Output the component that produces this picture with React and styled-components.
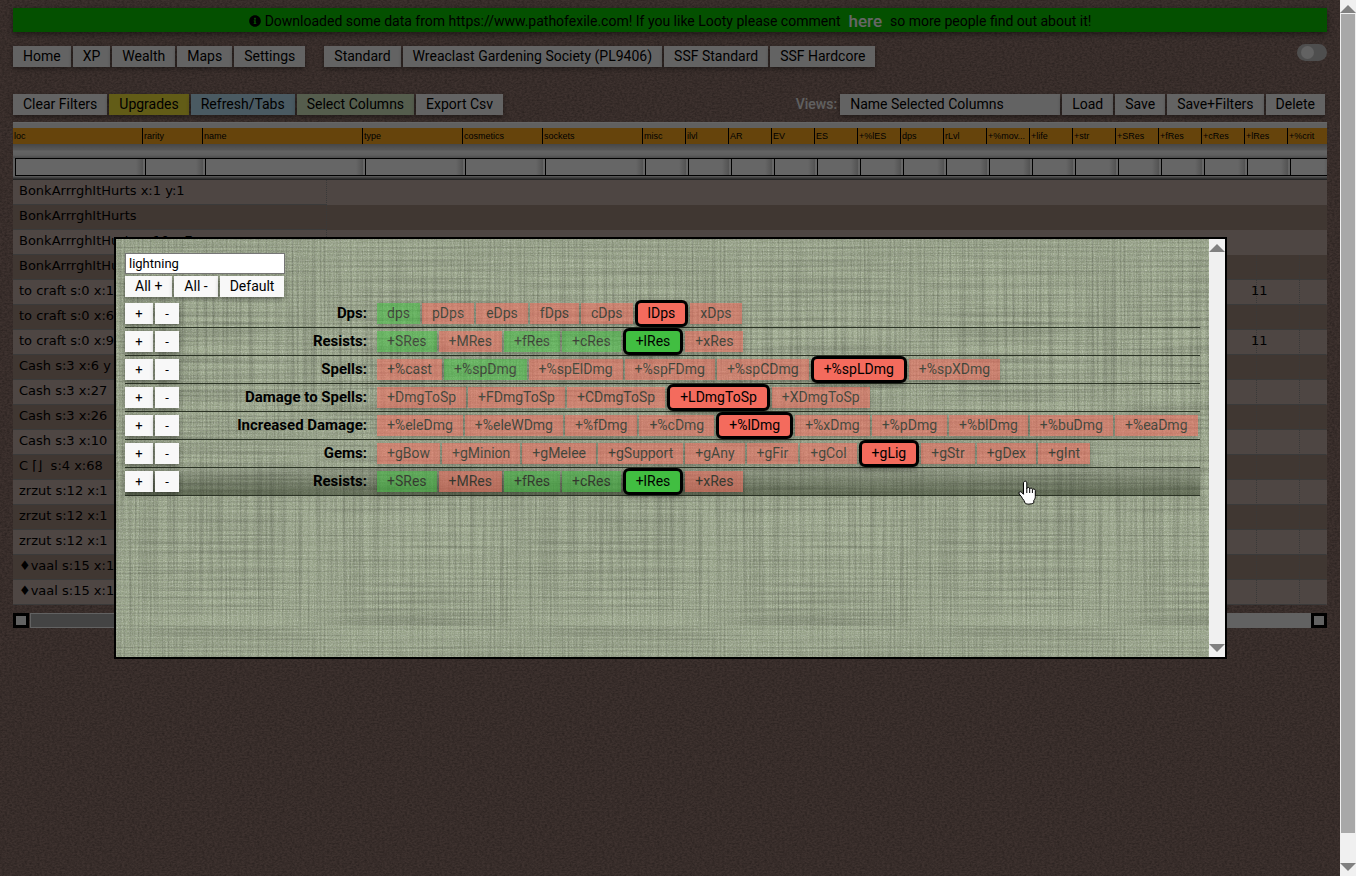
import React from 'react';
import styled, { createGlobalStyle, css } from 'styled-components';
import { FaInfoCircle } from 'react-icons/fa';

const svgUrl = (svg) => `url("data:image/svg+xml,${encodeURIComponent(svg)}")`;

const noise = (fx, fy, seed, tone, gain, base) => svgUrl(
  `<svg xmlns="http://www.w3.org/2000/svg" width="400" height="400"><filter id="n" x="0" y="0" width="100%" height="100%"><feTurbulence type="fractalNoise" baseFrequency="${fx} ${fy}" numOctaves="3" seed="${seed}" stitchTiles="stitch"/><feColorMatrix values="0 0 0 0 ${tone}  0 0 0 0 ${tone}  0 0 0 0 ${tone}  ${gain} 0 0 0 ${base}"/></filter><rect width="400" height="400" filter="url(#n)"/></svg>`
);

const leather = noise(0.4, 0.6, 4, 0, 0.5, -0.14);

const linen = [
  noise(0.5, 0.006, 3, 0, 0.4, -0.15),
  noise(0.006, 0.5, 8, 0, 0.4, -0.15),
  noise(0.8, 0.8, 5, 1, 0.6, -0.2),
].join(', ');

const GlobalStyle = createGlobalStyle`
  *, *::before, *::after { box-sizing: border-box; }
  body { margin: 0; background: #372c2a; font: 14px/21px Roboto, sans-serif; color: #000; }
  button, input { font: inherit; color: inherit; margin: 0; }
`;

const Screen = styled.div`
  display: flex;
  height: 100vh;
  overflow: hidden;
`;

const Main = styled.div`
  position: relative;
  flex: 1;
  min-width: 0;
  padding: 8px 13px;
  overflow: hidden;
  background: ${leather} #9c7e76;
`;

const Banner = styled.div`
  display: flex;
  align-items: center;
  justify-content: center;
  height: 24px;
  padding-top: 2px;
  background: #0cc800;
  box-shadow: 0 2px 6px rgba(0, 0, 0, 0.5);
  white-space: pre;

  svg { margin-right: 4px; }
`;

const BannerLink = styled.a`
  margin: 0 8px;
  color: #fff;
  font-size: 17px;
  font-weight: 500;
  text-decoration: none;
`;

const Bar = styled.div`
  display: flex;
  align-items: center;
  gap: 2px;
  height: 21px;
  margin-top: ${(p) => p.$top}px;
`;

const Gap = styled.span`
  width: 15px;
`;

const Spacer = styled.span`
  flex: 1;
`;

const tones = {
  plain: '#f8f8f8',
  gold: '#f6e63a',
  sky: '#b8e0f4',
  sage: '#d4e8c0',
};

const Button = styled.button`
  height: 21px;
  padding: 0 10px;
  border: 0;
  background: ${(p) => tones[p.$tone || 'plain']};
  box-shadow: 0 2px 5px rgba(0, 0, 0, 0.4);
  line-height: 21px;
  white-space: nowrap;
`;

const ViewsLabel = styled.label`
  margin-right: 1px;
  color: #f0f0f0;
  font-weight: 500;
`;

const ViewInput = styled.input`
  width: 220px;
  height: 21px;
  padding: 0 10px;
  border: 0;
  background: #f8f8f8;
  box-shadow: 0 2px 5px rgba(0, 0, 0, 0.4);
`;

const Toggle = styled.input`
  appearance: none;
  align-self: flex-start;
  display: flex;
  align-items: center;
  width: 30px;
  height: 17px;
  margin: -2px 0 0;
  padding-left: 4px;
  border-radius: 9px;
  background: #c4c4c4;

  &::before {
    content: '';
    width: 13px;
    height: 13px;
    border-radius: 50%;
    background: #f4f4f4;
  }
`;

const Grid = styled.section`
  margin-top: 7px;
  overflow: hidden;
`;

const HeadTable = styled.table`
  width: 1317px;
  table-layout: fixed;
  border-collapse: separate;
  border-spacing: 0;
  background: #f0f0f0;
`;

const HeadPad = styled.div`
  height: 6px;
  background: #f0f0f0;
  border-top: 1px solid #fff;
`;

const HeadCell = styled.th`
  height: 16px;
  padding: 0 0 0 1px;
  border-left: ${(p) => (p.$first ? '0' : '1px solid #000')};
  background: #ffab20;
  font-family: "Liberation Sans", sans-serif;
  font-size: 9px;
  font-weight: 400;
  line-height: 16px;
  text-align: left;
  white-space: nowrap;
  overflow: hidden;
`;

const FilterRow = styled.tr`
  background: linear-gradient(#b0b0b0, #dcdcdc 6px, #f8f8f8 7px, #eee 11px, #bbb 14px, #eee 15px, #eee 32px, #bbb 33px, #444 36px);
`;

const FilterCell = styled.td`
  height: 36px;
  padding: 14px 0 4px ${(p) => (p.$first ? 2 : 3)}px;
`;

const FilterInput = styled.input`
  display: block;
  width: calc(100% + 3px);
  height: 18px;
  border: 1px solid #000;
  border-right: 0;
  background: linear-gradient(90deg, #fff calc(100% - 9px), #d0d0d0 calc(100% - 2px), #fff calc(100% - 2px));
  border-radius: 0;
`;

const BodyTable = styled.table`
  width: 100%;
  table-layout: fixed;
  border-collapse: separate;
  border-spacing: 0;
  font: 13px/20px "DejaVu Sans", Verdana, sans-serif;
`;

const BodyRow = styled.tr`
  height: 25px;
  background: ${(p) => (p.$alt ? '#a0897d' : '#c4afa8')};
`;

const BodyCell = styled.td`
  height: 25px;
  padding: 0 0 2px ${(p) => (p.$value ? 37 : 6)}px;
  border-right: 1px dotted ${(p) => (p.$open ? 'transparent' : '#8f8f8f')};
  border-bottom: 1px solid ${(p) => (p.$bare ? 'transparent' : '#929292')};
  white-space: pre;
`;

const Pager = styled.div`
  display: flex;
  height: 15px;
  margin-top: 8px;
`;

const PagerHandle = styled.button`
  width: 16px;
  height: 15px;
  padding: 0;
  border: 3px solid #000;
  background: #f4f4f4;
`;

const PagerTrack = styled.div`
  flex: ${(p) => p.$grow};
  margin-left: ${(p) => (p.$dark ? 1 : 0)}px;
  border: 1px solid #f4f4f4;
  background: ${(p) => (p.$dark ? '#aaa' : '#f4f4f4')};
`;

const Overlay = styled.div`
  position: absolute;
  inset: 0;
  display: flex;
  align-items: flex-start;
  padding: 237px 113px 0 114px;
  background: rgba(0, 0, 0, 0.6);
`;

const Dialog = styled.section`
  display: flex;
  flex: 1;
  min-width: 0;
  height: 422px;
  border: 2px solid #000;
  background: ${linen}, #9eaa8e;
`;

const DialogBody = styled.div`
  flex: 1;
  min-width: 0;
  padding: 14px 9px;
`;

const Search = styled.input`
  display: block;
  width: 160px;
  height: 21px;
  padding: 0 3px;
  border: 1px solid #767676;
  background: #fff;
  font-size: 13px;
`;

const Choices = styled.div`
  margin-top: 3px;
`;

const ChoiceRow = styled.div`
  display: flex;
  align-items: center;
  gap: 2px;
  height: 28px;
  border-bottom: 1px solid #2c3426;
  ${(p) => p.$hover && css`
    background: linear-gradient(rgba(80, 80, 80, 0.15), rgba(40, 50, 30, 0.5));
  `}
`;

const SignButton = styled(Button)`
  width: ${(p) => (p.$wide ? 28 : 24)}px;
  padding: 0;
  font-size: 13px;
`;

const ChoiceLabel = styled.span`
  width: 186px;
  margin-right: 8px;
  font-size: 15px;
  font-weight: 700;
  text-align: right;
  white-space: nowrap;
`;

const Chip = styled(Button)`
  background: ${(p) => (p.$on ? '#41be41' : '#f46b5d')};
  opacity: 0.55;
  ${(p) => p.$hit && css`
    height: 27px;
    border: 3px solid #000;
    border-radius: 6px;
    opacity: 1;
  `}
`;

const ScrollBar = styled.div`
  display: flex;
  flex-direction: column;
  width: 16px;
  flex: none;
  background: #f0f0f0;
`;

const ScrollThumb = styled.div`
  flex: 1;
  margin: 0 1px ${(p) => p.$rest}px;
  background: ${(p) => (p.$hidden ? 'transparent' : '#a8a8a8')};
`;

const Arrow = styled.svg`
  display: block;
  width: 16px;
  height: ${(p) => p.$h}px;
  fill: #808080;
`;

const Pointer = styled.svg`
  position: absolute;
  left: 1018px;
  top: 480px;
  width: 19px;
  height: 26px;
`;

const columns = [
  ['loc', 129], ['rarity', 60], ['name', 160], ['type', 100], ['cosmetics', 80], ['sockets', 100],
  ['misc', 43], ['ilvl', 43], ['AR', 43], ['EV', 43], ['ES', 43], ['+%lES', 43], ['dps', 43],
  ['rLvl', 43], ['+%mov...', 43], ['+life', 43], ['+str', 43], ['+SRes', 43], ['+fRes', 43],
  ['+cRes', 43], ['+lRes', 43], ['+%crit', 43],
];

const items = [
  { loc: 'BonkArrrghItHurts x:1 y:1', group: true },
  { loc: 'BonkArrrghItHurts', group: true },
  { loc: 'BonkArrrghItHurts x:10 y:7', group: true },
  { loc: 'BonkArrrghItHurts' },
  { loc: 'to craft s:0 x:1', res: '11' },
  { loc: 'to craft s:0 x:6' },
  { loc: 'to craft s:0 x:9', res: '11' },
  { loc: 'Cash s:3 x:6 y' },
  { loc: 'Cash s:3 x:27' },
  { loc: 'Cash s:3 x:26' },
  { loc: 'Cash s:3 x:10' },
  { loc: 'C ⌈⌋  s:4 x:68' },
  { loc: 'zrzut s:12 x:1' },
  { loc: 'zrzut s:12 x:1' },
  { loc: 'zrzut s:12 x:1' },
  { loc: '♦vaal s:15 x:1' },
  { loc: '♦vaal s:15 x:1' },
];

// "*" marks a column that is switched on, "!" one that matches the search
const resists = ['*+SRes', '+MRes', '*+fRes', '*+cRes', '*!+lRes', '+xRes'];
const groups = [
  ['Dps:', ['*dps', 'pDps', 'eDps', 'fDps', 'cDps', '!lDps', 'xDps']],
  ['Resists:', resists],
  ['Spells:', ['+%cast', '*+%spDmg', '+%spElDmg', '+%spFDmg', '+%spCDmg', '!+%spLDmg', '+%spXDmg']],
  ['Damage to Spells:', ['+DmgToSp', '+FDmgToSp', '+CDmgToSp', '!+LDmgToSp', '+XDmgToSp']],
  ['Increased Damage:', ['+%eleDmg', '+%eleWDmg', '+%fDmg', '+%cDmg', '!+%lDmg', '+%xDmg', '+%pDmg', '+%blDmg', '+%buDmg', '+%eaDmg']],
  ['Gems:', ['+gBow', '+gMinion', '+gMelee', '+gSupport', '+gAny', '+gFir', '+gCol', '!+gLig', '+gStr', '+gDex', '+gInt']],
  ['Resists:', resists, true],
];

function Scroll({ rest, hidden }) {
  return (
    <ScrollBar aria-hidden="true">
      <Arrow $h={14} viewBox="0 0 16 14"><path d="M8 5L16 13H0Z" /></Arrow>
      <ScrollThumb $rest={rest} $hidden={hidden} />
      <Arrow $h={14} viewBox="0 0 16 14"><path d="M0 1H16L8 9Z" /></Arrow>
    </ScrollBar>
  );
}

function ItemGrid() {
  return (
    <Grid>
      <HeadPad />
      <HeadTable>
        <colgroup>{columns.map(([n, w]) => <col key={n} width={w} />)}</colgroup>
        <thead>
          <tr>{columns.map(([n], i) => <HeadCell key={n} $first={i === 0}>{n}</HeadCell>)}</tr>
          <FilterRow>
            {columns.map(([n], i) => (
              <FilterCell key={n} $first={i === 0}><FilterInput aria-label={`Filter ${n}`} /></FilterCell>
            ))}
          </FilterRow>
        </thead>
      </HeadTable>
      <BodyTable>
        <colgroup>
          <col width="314" /><col /><col width="43" /><col width="43" /><col width="27" />
        </colgroup>
        <tbody>
          {items.map((item, i) => (
            <BodyRow key={i} $alt={i % 2 === 1}>
              <BodyCell>{item.loc}</BodyCell>
              {item.group ? <BodyCell colSpan={4} $open $bare /> : (
                <>
                  <BodyCell />
                  <BodyCell $value>{item.res}</BodyCell>
                  <BodyCell />
                  <BodyCell $open />
                </>
              )}
            </BodyRow>
          ))}
        </tbody>
      </BodyTable>
    </Grid>
  );
}

function ColumnDialog() {
  return (
    <Dialog role="dialog" aria-label="Select Columns">
      <DialogBody>
        <Search aria-label="Search columns" defaultValue="lightning" />
        <Bar $top={2}>
          <Button>All +</Button>
          <Button>All -</Button>
          <Button>Default</Button>
        </Bar>
        <Choices>
          {groups.map(([label, chips, hover], i) => (
            <ChoiceRow key={i} $hover={hover}>
              <SignButton $wide>+</SignButton>
              <SignButton>-</SignButton>
              <ChoiceLabel>{label}</ChoiceLabel>
              {chips.map((c) => (
                <Chip key={c} $on={c.includes('*')} $hit={c.includes('!')}>{c.replace(/[*!]/g, '')}</Chip>
              ))}
            </ChoiceRow>
          ))}
        </Choices>
      </DialogBody>
      <Scroll rest={0} hidden />
    </Dialog>
  );
}

export default function App() {
  return (
    <Screen>
      <GlobalStyle />
      <Main>
        <Banner>
          <FaInfoCircle size={12} />
          Downloaded some data from https://www.pathofexile.com! If you like Looty please comment
          <BannerLink href="#comment">here</BannerLink>
          so more people find out about it!
        </Banner>
        <Bar as="nav" $top={14}>
          <Button>Home</Button>
          <Button>XP</Button>
          <Button>Wealth</Button>
          <Button>Maps</Button>
          <Button>Settings</Button>
          <Gap />
          <Button>Standard</Button>
          <Button>Wreaclast Gardening Society (PL9406)</Button>
          <Button>SSF Standard</Button>
          <Button>SSF Hardcore</Button>
          <Spacer />
          <Toggle type="checkbox" aria-label="Dark mode" />
        </Bar>
        <Bar $top={27}>
          <Button>Clear Filters</Button>
          <Button $tone="gold">Upgrades</Button>
          <Button $tone="sky">Refresh/Tabs</Button>
          <Button $tone="sage">Select Columns</Button>
          <Button>Export Csv</Button>
          <Spacer />
          <ViewsLabel htmlFor="view-name">Views:</ViewsLabel>
          <ViewInput id="view-name" defaultValue="Name Selected Columns" />
          <Button>Load</Button>
          <Button>Save</Button>
          <Button>Save+Filters</Button>
          <Button>Delete</Button>
          <span />
        </Bar>
        <ItemGrid />
        <Pager>
          <PagerHandle aria-label="Scroll left" />
          <PagerTrack $grow={1} $dark />
          <PagerTrack $grow={1} />
          <PagerHandle aria-label="Scroll right" />
        </Pager>
        <Overlay><ColumnDialog /></Overlay>
        <Pointer viewBox="0 0 19 26" aria-hidden="true">
          <path
            d="M5.500 3c0-2.400 3.300-2.400 3.300 0v5.500c.4-1.600 2.900-1.400 2.900.4c.5-1.300 2.700-1 2.700.7c.5-1.100 2.900-.7 2.900.9v6.200c0 1.600-.7 2.700-1.500 3.800v2.300c-1 .9-3.500 1.300-5.300 1.300s-2.800-.5-3.600-1.300c-.3-1.400-1.200-2.900-2.400-4.300C3.800 16.800 2.200 15.200 1.200 14c-1-1.700 1-3 2.300-1.700l2 2z"
            fill="#fff"
            stroke="#000"
          />
          <path d="M8.800 8v5M11.700 9v4M14.400 10v3" stroke="#000" fill="none" />
        </Pointer>
      </Main>
      <Scroll rest={29} />
    </Screen>
  );
}
